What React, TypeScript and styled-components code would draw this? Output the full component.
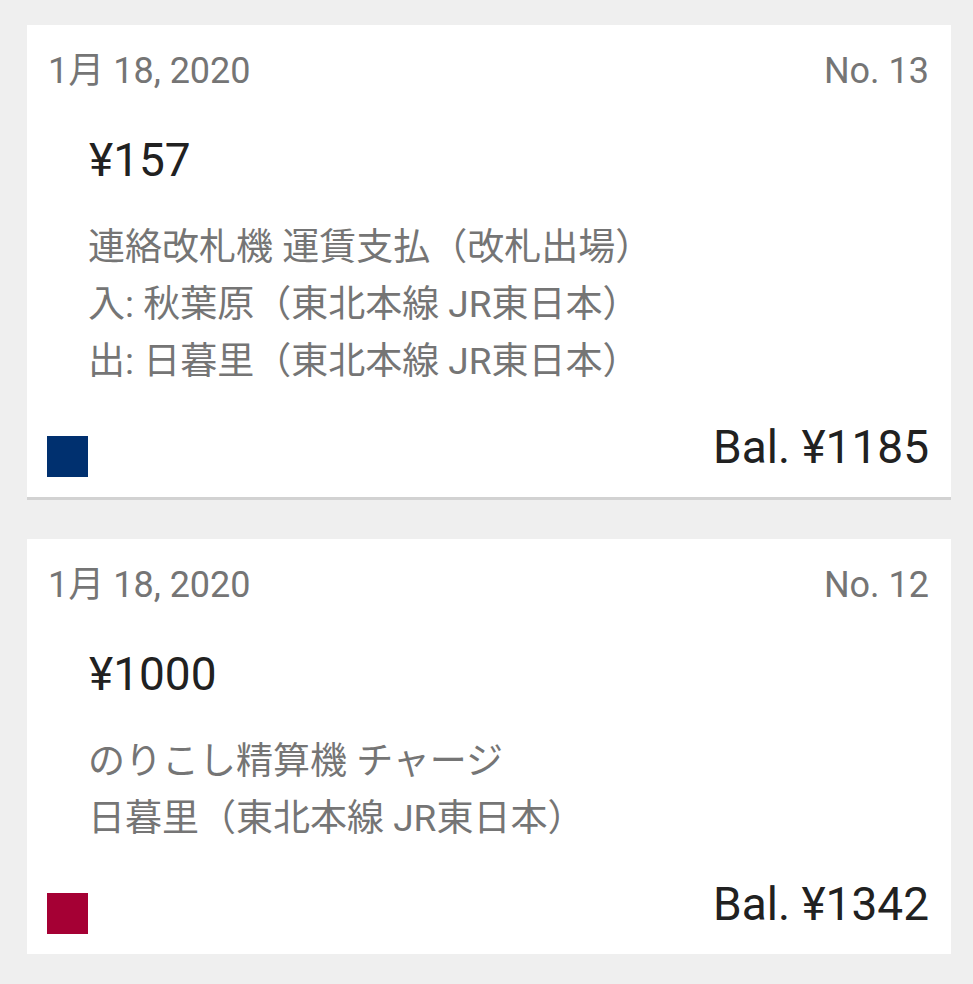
import React from "react";
import styled, { createGlobalStyle } from "styled-components";

const GlobalStyle = createGlobalStyle`
  html, body {
    margin: 0;
    padding: 0;
    background: #efefef;
  }
  body {
    font-family: Roboto, "Noto Sans CJK JP", sans-serif;
  }
`;

const List = styled.div`
  display: flex;
  flex-direction: column;
  gap: 42px;
  padding: 25px 22px 0 27px;
`;

const Card = styled.div`
  background: #ffffff;
  width: 924px;
  box-sizing: border-box;
  padding: 24px 22px 20px 20px;
  display: flex;
  flex-direction: column;
  box-shadow: 0 3px 0 #d2d2d2;
`;

const Header = styled.div`
  display: flex;
  justify-content: space-between;
  align-items: baseline;
  padding-left: 1px;
  font-size: 36px;
  line-height: 44px;
  color: #757575;
`;

const Amount = styled.div`
  margin-top: 40px;
  padding-left: 42px;
  font-size: 46px;
  line-height: 54px;
  color: #212121;
`;

const Details = styled.div`
  margin-top: 32px;
  padding-left: 41px;
  display: flex;
  flex-direction: column;
`;

const DetailLine = styled.div`
  font-size: 37px;
  line-height: 57px;
  color: #757575;
  white-space: nowrap;
`;

const Footer = styled.div`
  margin-top: 31px;
  display: flex;
  justify-content: space-between;
  align-items: flex-end;
`;

const Swatch = styled.div<{ $color: string }>`
  width: 41px;
  height: 41px;
  background: ${(p) => p.$color};
`;

const Balance = styled.div`
  font-size: 46px;
  line-height: 52px;
  color: #212121;
  margin-bottom: 4px;
`;

type Entry = {
  date: string;
  no: string;
  amount: string;
  lines: string[];
  color: string;
  balance: string;
};

const entries: Entry[] = [
  {
    date: "1月 18, 2020",
    no: "No. 13",
    amount: "¥157",
    lines: [
      "連絡改札機 運賃支払（改札出場）",
      "入: 秋葉原（東北本線 JR東日本）",
      "出: 日暮里（東北本線 JR東日本）",
    ],
    color: "#00306f",
    balance: "Bal. ¥1185",
  },
  {
    date: "1月 18, 2020",
    no: "No. 12",
    amount: "¥1000",
    lines: ["のりこし精算機 チャージ", "日暮里（東北本線 JR東日本）"],
    color: "#a50034",
    balance: "Bal. ¥1342",
  },
];

export default function App() {
  return (
    <>
      <GlobalStyle />
      <List>
        {entries.map((e) => (
          <Card key={e.no}>
            <Header>
              <span>{e.date}</span>
              <span>{e.no}</span>
            </Header>
            <Amount>{e.amount}</Amount>
            <Details>
              {e.lines.map((l) => (
                <DetailLine key={l}>{l}</DetailLine>
              ))}
            </Details>
            <Footer>
              <Swatch $color={e.color} />
              <Balance>{e.balance}</Balance>
            </Footer>
          </Card>
        ))}
      </List>
    </>
  );
}
